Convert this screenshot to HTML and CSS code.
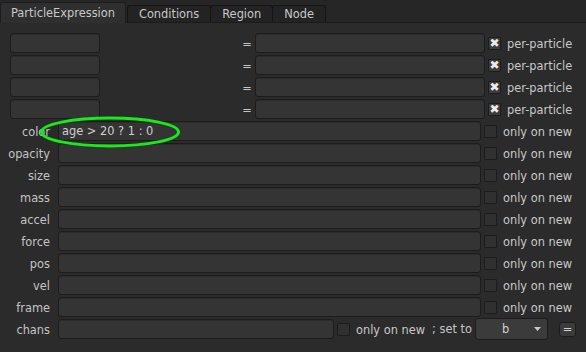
FILE: index.html
```html
<!DOCTYPE html>
<html lang="en">
<head>
    <meta charset="UTF-8">
    <title>ParticleExpression</title>
    <link rel="stylesheet" href="styles.css">
</head>
<body>
    <header class="tabs">
        <div class="tab active">ParticleExpression</div>
        <div class="tab">Conditions</div>
        <div class="tab">Region</div>
        <div class="tab">Node</div>
    </header>
    <section class="panel">
        <div class="vars">
            <div class="var"><span class="field name"></span><span class="eq">=</span><span class="field expr"></span><span class="check on"></span><span class="txt">per-particle</span></div>
            <div class="var"><span class="field name"></span><span class="eq">=</span><span class="field expr"></span><span class="check on"></span><span class="txt">per-particle</span></div>
            <div class="var"><span class="field name"></span><span class="eq">=</span><span class="field expr"></span><span class="check on"></span><span class="txt">per-particle</span></div>
            <div class="var"><span class="field name"></span><span class="eq">=</span><span class="field expr"></span><span class="check on"></span><span class="txt">per-particle</span></div>
        </div>
        <div class="props">
            <div class="prop"><label>color</label><span class="field">age &gt; 20 ? 1 : 0</span><span class="check"></span><span class="txt">only on new</span></div>
            <div class="prop"><label>opacity</label><span class="field"></span><span class="check"></span><span class="txt">only on new</span></div>
            <div class="prop"><label>size</label><span class="field"></span><span class="check"></span><span class="txt">only on new</span></div>
            <div class="prop"><label>mass</label><span class="field"></span><span class="check"></span><span class="txt">only on new</span></div>
            <div class="prop"><label>accel</label><span class="field"></span><span class="check"></span><span class="txt">only on new</span></div>
            <div class="prop"><label>force</label><span class="field"></span><span class="check"></span><span class="txt">only on new</span></div>
            <div class="prop"><label>pos</label><span class="field"></span><span class="check"></span><span class="txt">only on new</span></div>
            <div class="prop"><label>vel</label><span class="field"></span><span class="check"></span><span class="txt">only on new</span></div>
            <div class="prop"><label>frame</label><span class="field"></span><span class="check"></span><span class="txt">only on new</span></div>
            <div class="prop chans">
                <label>chans</label><span class="field short"></span><span class="check"></span><span class="txt">only on new</span>
                <span class="setto">; set to</span>
                <span class="select">b<svg class="arrow" width="7" height="4" viewBox="0 0 7 4"><path d="M0 0H7L3.5 4Z" fill="#c8c8c8"/></svg></span>
                <span class="btn">=</span>
            </div>
        </div>
        <svg class="mark" width="146" height="36" viewBox="0 0 146 36"><ellipse cx="73" cy="17" rx="68.5" ry="14" fill="none" stroke="#19ea19" stroke-width="3"/></svg>
    </section>
</body>
</html>
```
FILE: styles.css
```css
body{
    margin:0;
    background:#2b2b2b;
    font-family:"DejaVu Sans",Verdana,sans-serif;
    font-size:11.4px;
    color:#c4c4c4;
}
/*tab bar*/
.tabs{
    display:flex;
    align-items:flex-end;
    height:23px;
    background:#262626;
    border-bottom:1px solid #1b1b1b;
    box-sizing:border-box;
}
.tab{
    height:16px;
    line-height:16px;
    padding:0 11px;
    background:#232323;
    border:1px solid #151515;
    border-bottom:none;
    border-radius:3px 3px 0 0;
    margin-left:-1px;
    color:#c8c8c8;
}
.tab:first-child{margin-left:0;}
.tab.active{
    height:20px;
    line-height:20px;
    padding:0 10px;
    background:#2f2f2f;
    border-color:#1d1d1d;
    margin-bottom:-1px;
    margin-right:2px;
}
/*panel*/
.panel{
    position:relative;
    padding:10px 0 0 0;
}
.field{
    display:block;
    height:20px;
    box-sizing:border-box;
    background:#343434;
    border:1px solid #1c1c1c;
    border-radius:3px;
    box-shadow:inset 0 1px 0 rgba(0,0,0,0.15);
    padding:0 3px;
    line-height:19px;
    color:#cfcfcf;
    white-space:nowrap;
}
.check{
    display:block;
    width:13px;height:13px;
    box-sizing:border-box;
    border:1px solid #1c1c1c;
    background:#303030;
    border-radius:1px;
    flex:none;
}
.check.on{
    background:#3c3c3c;
    position:relative;
}
.check.on::after{
    content:"\2716";
    position:absolute;
    left:0;top:-2px;
    width:11px;
    text-align:center;
    font-size:12px;
    color:#ececec;
}
.txt{
    white-space:nowrap;
    color:#c8c8c8;
    padding-top:2px;
}
/*variable rows*/
.var{
    display:flex;
    align-items:center;
    height:20px;
    margin-bottom:2px;
    padding-left:10px;
}
.var .name{width:90px;}
.var .eq{
    width:16px;
    margin-left:139px;
    text-align:center;
    padding-top:2px;
}
.var .expr{width:230px;}
.var .check{margin-left:3px;}
.var .txt{margin-left:6px;}
/*property rows*/
.props{margin-top:1px;}
.prop{
    display:flex;
    align-items:center;
    height:20px;
    margin-bottom:2px;
}
.prop label{
    width:50px;
    text-align:right;
    margin-right:8px;
    padding-top:2px;
    color:#c4c4c4;
}
.prop .field{width:423px;}
.prop .check{margin-left:3px;}
.prop .txt{margin-left:6px;}
.prop .field.short{width:276px;}
.chans .setto{
    margin-left:7px;
    white-space:nowrap;
}
.select{
    position:relative;
    display:block;
    width:73px;height:22px;
    box-sizing:border-box;
    margin-left:3px;
    background:#3b3b3b;
    border:1px solid #1c1c1c;
    border-radius:3px;
    text-align:center;
    line-height:20px;
    color:#d0d0d0;
    padding-right:12px;
}
.arrow{
    position:absolute;
    right:6px;top:8px;
}
.btn{
    display:block;
    width:17px;height:15px;
    box-sizing:border-box;
    margin-left:11px;
    background:#3b3b3b;
    border:1px solid #1c1c1c;
    border-radius:3px;
    text-align:center;
    line-height:13px;
    color:#d0d0d0;
}
.mark{
    position:absolute;
    left:37px;top:92px;
}
```
